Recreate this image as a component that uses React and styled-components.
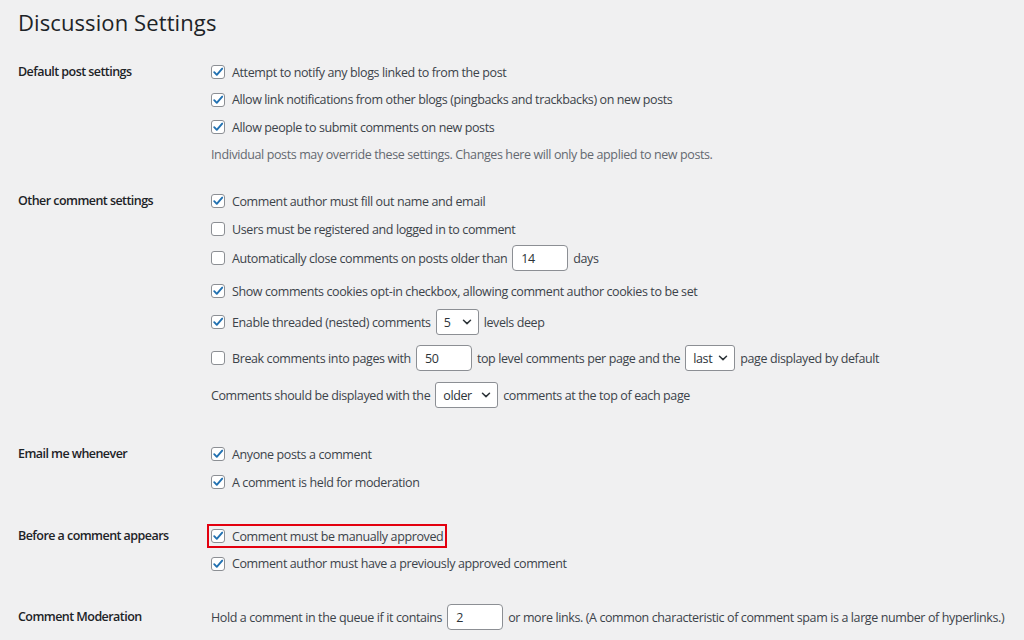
import React from "react";
import styled, { createGlobalStyle } from "styled-components";

const GlobalStyle = createGlobalStyle`
  html, body {
    margin: 0;
    padding: 0;
    background: #f0f0f1;
  }
  body {
    font-family: "Open Sans", "Noto Sans", sans-serif;
    font-size: 12.5px;
    color: #3c434a;
    letter-spacing: -0.39px;
  }
  * {
    box-sizing: border-box;
  }
`;

const Page = styled.div`
  width: 1024px;
  height: 640px;
  overflow: hidden;
  padding: 7px 18px 0;
`;

const Title = styled.h1`
  margin: 0;
  font-size: 22px;
  font-weight: 400;
  line-height: 30px;
  color: #1d2327;
  letter-spacing: 0.1px;
`;

const Section = styled.section`
  display: flex;
  margin-top: ${({ $top }) => $top}px;
`;

const Label = styled.div`
  width: 193px;
  flex-shrink: 0;
  height: 28px;
  line-height: 28px;
  font-weight: 600;
  color: #1d2327;
  letter-spacing: -0.55px;
`;

const Options = styled.div`
  display: flex;
  flex-direction: column;
`;

const Row = styled.div`
  display: flex;
  align-items: center;
  height: ${({ $h }) => $h || 28}px;
  white-space: nowrap;
`;

const Option = styled.label`
  display: inline-flex;
  align-items: center;
  gap: 7px;
  height: 16px;
  outline: ${({ $highlight }) => ($highlight ? "2px solid #e3000f" : "none")};
  outline-offset: 2px;
`;

const Box = styled.span`
  width: 14px;
  height: 14px;
  border: 1px solid #8c8f94;
  border-radius: 3px;
  background: #fff;
  display: inline-flex;
  align-items: center;
  justify-content: center;
  flex-shrink: 0;
`;

const Description = styled.span`
  color: #646970;
`;

const TextInput = styled.span`
  display: inline-flex;
  align-items: center;
  width: 56px;
  height: 26px;
  padding: 0 8px;
  margin: 0 5px;
  background: #fff;
  border: 1px solid #8c8f94;
  border-radius: 4px;
  color: #2c3338;
  align-self: ${({ $raise }) => ($raise ? "flex-start" : "center")};
  margin-top: ${({ $raise }) => ($raise ? $raise : 0)}px;
`;

const Select = styled.span`
  display: inline-flex;
  align-items: center;
  justify-content: space-between;
  width: ${({ $w }) => $w}px;
  height: 26px;
  padding: 0 6px 0 7px;
  margin: 0 5px;
  background: #fff;
  border: 1px solid #8c8f94;
  border-radius: 3px;
  color: #2c3338;
`;

const Check = ({ checked }) => (
  <Box>
    {checked && (
      <svg width="12" height="12" viewBox="0 0 12 12">
        <polyline
          points="2.2,6.2 4.8,8.8 10.2,2.6"
          fill="none"
          stroke="#2271b1"
          strokeWidth="1.9"
          strokeLinecap="round"
          strokeLinejoin="round"
        />
      </svg>
    )}
  </Box>
);

const Chevron = () => (
  <svg width="10" height="10" viewBox="0 0 10 10">
    <polyline
      points="1.5,3.2 5,6.6 8.5,3.2"
      fill="none"
      stroke="#2c3338"
      strokeWidth="1.5"
      strokeLinecap="round"
      strokeLinejoin="round"
    />
  </svg>
);

const CheckOption = ({ checked = true, highlight, children }) => (
  <Option $highlight={highlight}>
    <Check checked={checked} />
    <span>{children}</span>
  </Option>
);

export default function App() {
  return (
    <>
      <GlobalStyle />
      <Page>
        <Title>Discussion Settings</Title>

        <Section $top={21}>
          <Label>Default post settings</Label>
          <Options>
            <Row $h={28}>
              <CheckOption>Attempt to notify any blogs linked to from the post</CheckOption>
            </Row>
            <Row $h={27}>
              <CheckOption>
                Allow link notifications from other blogs (pingbacks and trackbacks) on new posts
              </CheckOption>
            </Row>
            <Row $h={28}>
              <CheckOption>Allow people to submit comments on new posts</CheckOption>
            </Row>
            <Row $h={27}>
              <Description>
                Individual posts may override these settings. Changes here will only be applied to
                new posts.
              </Description>
            </Row>
          </Options>
        </Section>

        <Section $top={19}>
          <Label>Other comment settings</Label>
          <Options>
            <Row $h={28}>
              <CheckOption>Comment author must fill out name and email</CheckOption>
            </Row>
            <Row $h={28}>
              <CheckOption checked={false}>Users must be registered and logged in to comment</CheckOption>
            </Row>
            <Row $h={30}>
              <CheckOption checked={false}>Automatically close comments on posts older than</CheckOption>
              <TextInput $raise={2}>14</TextInput>
              <span>days</span>
            </Row>
            <Row $h={36}>
              <CheckOption>
                Show comments cookies opt-in checkbox, allowing comment author cookies to be set
              </CheckOption>
            </Row>
            <Row $h={26}>
              <CheckOption>Enable threaded (nested) comments</CheckOption>
              <Select $w={43}>
                5 <Chevron />
              </Select>
              <span>levels deep</span>
            </Row>
            <Row $h={46}>
              <CheckOption checked={false}>Break comments into pages with</CheckOption>
              <TextInput>50</TextInput>
              <span>top level comments per page and the</span>
              <Select $w={50}>
                last <Chevron />
              </Select>
              <span>page displayed by default</span>
            </Row>
            <Row $h={28}>
              <span>Comments should be displayed with the</span>
              <Select $w={63}>
                older <Chevron />
              </Select>
              <span>comments at the top of each page</span>
            </Row>
          </Options>
        </Section>

        <Section $top={31}>
          <Label>Email me whenever</Label>
          <Options>
            <Row $h={28}>
              <CheckOption>Anyone posts a comment</CheckOption>
            </Row>
            <Row $h={28}>
              <CheckOption>A comment is held for moderation</CheckOption>
            </Row>
          </Options>
        </Section>

        <Section $top={26}>
          <Label>Before a comment appears</Label>
          <Options>
            <Row $h={28}>
              <CheckOption highlight>Comment must be manually approved</CheckOption>
            </Row>
            <Row $h={27}>
              <CheckOption>Comment author must have a previously approved comment</CheckOption>
            </Row>
          </Options>
        </Section>

        <Section $top={26}>
          <Label>Comment Moderation</Label>
          <Options>
            <Row $h={28}>
              <span>Hold a comment in the queue if it contains</span>
              <TextInput>2</TextInput>
              <span>
                or more links. (A common characteristic of comment spam is a large number of
                hyperlinks.)
              </span>
            </Row>
          </Options>
        </Section>
      </Page>
    </>
  );
}
